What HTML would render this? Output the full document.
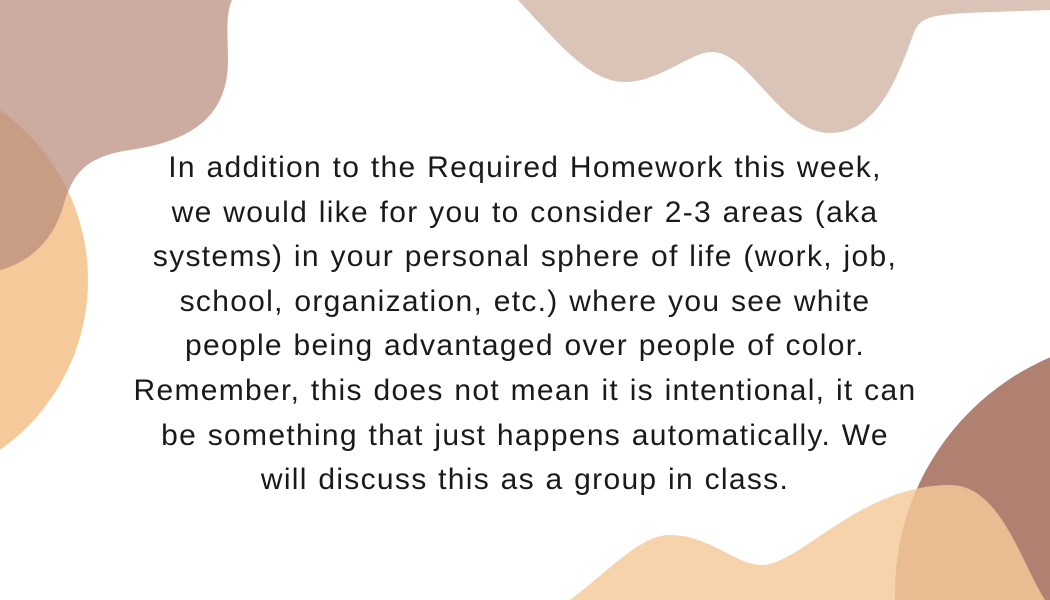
<!DOCTYPE html>
<html><head><style>
html,body{margin:0;width:1050px;height:600px;overflow:hidden}
body{background:#fff;position:relative}
svg{position:absolute;left:0;top:0}
.t{position:absolute;left:0;width:1050px;top:146px;text-align:center;font-family:"Liberation Sans",sans-serif;font-size:30px;line-height:44.6px;color:#1a1a1a;letter-spacing:1.3px;word-spacing:1px}
</style></head><body>
<svg width="1050" height="600" viewBox="0 0 1050 600">
<path d="M518,0 C560,45 590,82 625,82 C660,82 690,52 712,52 C750,52 780,133 830,133 C880,133 900,70 915,30 C925,12 940,14 1050,10 L1050,0 Z" fill="#d9c4b7"/>
<circle cx="1150" cy="592" r="255" fill="#b08070"/>
<path d="M570,600 C610,570 640,535 670,535 C710,535 735,565 762,565 C800,565 860,485 950,485 C1000,485 1020,560 1045,600 Z" fill="#f5c99a" fill-opacity="0.82"/>
<circle cx="-120" cy="280" r="208" fill="#f5c99a"/>
<path d="M0,0 L232,0 C225,15 228,40 228,60 C228,110 200,140 130,150 C90,156 75,170 65,200 C55,240 30,262 0,270 Z" fill="#b98a7c" fill-opacity="0.72"/>
</svg>
<div class="t">In addition to the Required Homework this week,<br>we would like for you to consider 2-3 areas (aka<br>systems) in your personal sphere of life (work, job,<br>school, organization, etc.) where you see white<br>people being advantaged over people of color.<br>Remember, this does not mean it is intentional, it can<br>be something that just happens automatically. We<br>will discuss this as a group in class.</div>
</body></html>
